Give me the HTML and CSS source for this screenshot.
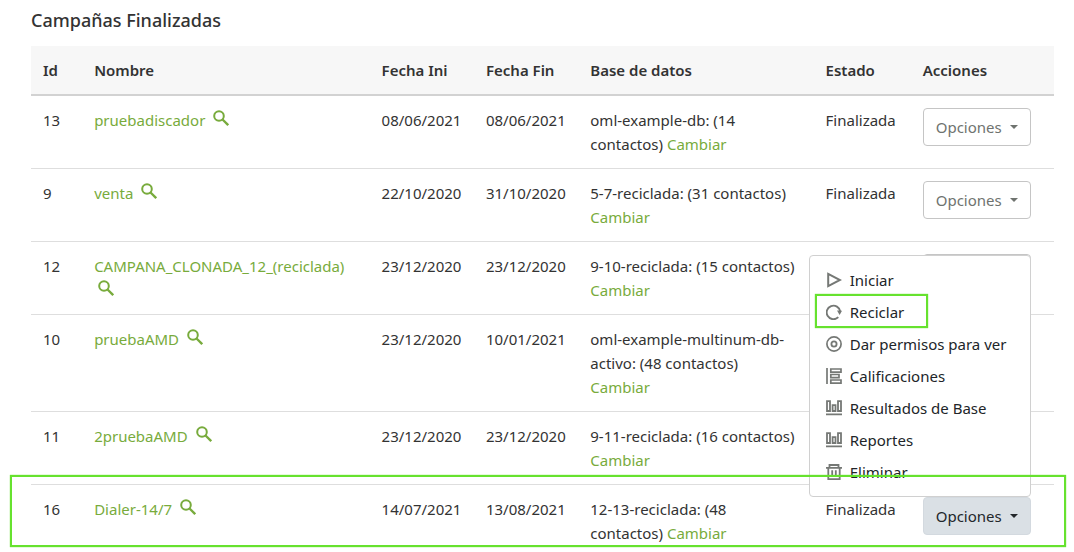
FILE: index.html
```
<!DOCTYPE html>
<html lang="es">
<head>
    <meta charset="UTF-8">
    <meta name="viewport" content="width=device-width, initial-scale=1.0">
    <title>Campañas Finalizadas</title>
    <link rel="stylesheet" href="styles.css">
</head>
<body>
    <!-- icon definitions -->
    <svg class="sprite" aria-hidden="true">
        <symbol id="search" viewBox="0 0 16 16">
            <circle cx="6" cy="6" r="4.8" fill="none" stroke="currentColor" stroke-width="2"/>
            <path d="M9.3 9.3L15.2 15.2" fill="none" stroke="currentColor" stroke-width="2.3"/>
        </symbol>
        <symbol id="play" viewBox="0 0 16 16">
            <path d="M2.2 1.8V14.2L14 8Z" fill="none" stroke="currentColor" stroke-width="2"/>
        </symbol>
        <symbol id="recycle" viewBox="0 0 16 16">
            <path d="M12.3 13.2A6.8 6.8 0 1 1 14.2 7.5" fill="none" stroke="currentColor" stroke-width="1.9"/>
            <path d="M11 6.5L16 6.7L13.6 11Z" fill="currentColor"/>
        </symbol>
        <symbol id="view" viewBox="0 0 16 16">
            <circle cx="8" cy="8" r="7.1" fill="none" stroke="currentColor" stroke-width="1.7"/>
            <circle cx="8" cy="8" r="2.6" fill="none" stroke="currentColor" stroke-width="1.8"/>
        </symbol>
        <symbol id="list" viewBox="0 0 16 16">
            <path d="M1 0V16M4.8 1H15V4.2H4.8ZM4.8 6.5H13V9.6H4.8ZM4.8 12H15V15.1H4.8Z" fill="none" stroke="currentColor" stroke-width="1.7"/>
        </symbol>
        <symbol id="chart" viewBox="0 0 16 16">
            <path d="M1 1.2H4V11H1ZM6.6 5.2H9.5V11H6.6ZM12 1.2H15V11H12ZM0 14.4H16" fill="none" stroke="currentColor" stroke-width="1.8"/>
        </symbol>
        <symbol id="trash" viewBox="0 0 16 16">
            <path d="M0 3.8H16M3.5 3.5V1H12.5V3.5M2.3 4V15.1H13.7V4M6.2 6.3V12.6M9.8 6.3V12.6" fill="none" stroke="currentColor" stroke-width="1.8"/>
        </symbol>
    </svg>

    <div class="content">
        <h2>Campañas Finalizadas</h2>

        <table class="campaigns">
            <colgroup>
                <col class="col-id">
                <col class="col-name">
                <col class="col-date">
                <col class="col-date">
                <col class="col-base">
                <col class="col-status">
                <col class="col-actions">
            </colgroup>
            <thead>
                <tr>
                    <th>Id</th>
                    <th>Nombre</th>
                    <th>Fecha Ini</th>
                    <th>Fecha Fin</th>
                    <th>Base de datos</th>
                    <th>Estado</th>
                    <th>Acciones</th>
                </tr>
            </thead>
            <tbody>
                <tr>
                    <td>13</td>
                    <td><a href="#">pruebadiscador</a> <a href="#" aria-label="Ver detalle"><svg class="search"><use href="#search"/></svg></a></td>
                    <td>08/06/2021</td>
                    <td>08/06/2021</td>
                    <td class="base">oml-example-db: (14 contactos) <a href="#">Cambiar</a></td>
                    <td>Finalizada</td>
                    <td><button class="btn">Opciones</button></td>
                </tr>
                <tr>
                    <td>9</td>
                    <td><a href="#">venta</a> <a href="#" aria-label="Ver detalle"><svg class="search"><use href="#search"/></svg></a></td>
                    <td>22/10/2020</td>
                    <td>31/10/2020</td>
                    <td class="base">5-7-reciclada: (31 contactos) <a href="#">Cambiar</a></td>
                    <td>Finalizada</td>
                    <td><button class="btn">Opciones</button></td>
                </tr>
                <tr>
                    <td>12</td>
                    <td><a href="#">CAMPANA_CLONADA_12_(reciclada)</a> <a href="#" aria-label="Ver detalle"><svg class="search"><use href="#search"/></svg></a></td>
                    <td>23/12/2020</td>
                    <td>23/12/2020</td>
                    <td class="base">9-10-reciclada: (15 contactos) <a href="#">Cambiar</a></td>
                    <td></td>
                    <td><button class="btn" aria-label="Opciones"></button></td>
                </tr>
                <tr>
                    <td>10</td>
                    <td><a href="#">pruebaAMD</a> <a href="#" aria-label="Ver detalle"><svg class="search"><use href="#search"/></svg></a></td>
                    <td>23/12/2020</td>
                    <td>10/01/2021</td>
                    <td class="base">oml-example-multinum-db-activo: (48 contactos) <a href="#">Cambiar</a></td>
                    <td></td>
                    <td><button class="btn" aria-label="Opciones"></button></td>
                </tr>
                <tr>
                    <td>11</td>
                    <td><a href="#">2pruebaAMD</a> <a href="#" aria-label="Ver detalle"><svg class="search"><use href="#search"/></svg></a></td>
                    <td>23/12/2020</td>
                    <td>23/12/2020</td>
                    <td class="base">9-11-reciclada: (16 contactos) <a href="#">Cambiar</a></td>
                    <td></td>
                    <td><button class="btn" aria-label="Opciones"></button></td>
                </tr>
                <tr class="marked-row">
                    <td>16</td>
                    <td><a href="#">Dialer-14/7</a> <a href="#" aria-label="Ver detalle"><svg class="search"><use href="#search"/></svg></a></td>
                    <td>14/07/2021</td>
                    <td>13/08/2021</td>
                    <td class="base">12-13-reciclada: (48 contactos) <a href="#">Cambiar</a></td>
                    <td>Finalizada</td>
                    <td>
                        <div class="dropup">
                            <button class="btn active" aria-expanded="true">Opciones</button>
                            <div class="menu">
                                <a href="#"><svg><use href="#play"/></svg>Iniciar</a>
                                <a href="#" class="marked-item"><svg><use href="#recycle"/></svg>Reciclar</a>
                                <a href="#"><svg><use href="#view"/></svg>Dar permisos para ver</a>
                                <a href="#"><svg><use href="#list"/></svg>Calificaciones</a>
                                <a href="#"><svg><use href="#chart"/></svg>Resultados de Base</a>
                                <a href="#"><svg><use href="#chart"/></svg>Reportes</a>
                                <a href="#"><svg><use href="#trash"/></svg>Eliminar</a>
                            </div>
                        </div>
                    </td>
                </tr>
            </tbody>
        </table>
    </div>
</body>
</html>
```

FILE: styles.css
```
* {
    box-sizing: border-box;
}
body {
    margin: 0;
    font-family: "Noto Sans", sans-serif;
    font-size: 15px;
    line-height: 24px;
    color: #333;
    background-color: #fff;
}
.sprite {
    display: none;
}
.content {
    padding: 8px 20px 0 31px;
}
h2 {
    margin: 0 0 14px;
    font-size: 18px;
    font-weight: 500;
    line-height: 24px;
}
a {
    color: #78ab3c;
    text-decoration: none;
}
.campaigns {
    width: 100%;
    table-layout: fixed;
    border-collapse: separate;
    border-spacing: 0;
}
.col-id { width: 5%; }
.col-name { width: 28.1%; }
.col-date { width: 10.2%; }
.col-base { width: 23%; }
.col-status { width: 9.5%; }
.col-actions { width: 14%; }
th {
    padding: 12px;
    background-color: #f7f7f7;
    border-bottom: 2px solid #d2d2d2;
    font-weight: 600;
    text-align: left;
}
td {
    padding: 12px;
    border-bottom: 1px solid #dedede;
    vertical-align: top;
}
.base {
    padding-right: 16px;
}
.search {
    width: 16px;
    height: 16px;
    margin-left: 4px;
}
.btn {
    display: flex;
    align-items: center;
    gap: 8px;
    min-width: 108px;
    height: 38px;
    padding: 0 12px;
    font: inherit;
    color: #6f736f;
    background-color: #fff;
    border: 1px solid #c5c5c5;
    border-radius: 4px;
    cursor: pointer;
}
.btn::after {
    content: "";
    border: 4px solid transparent;
    border-top-color: currentColor;
    border-bottom: 0;
}
.btn.active {
    color: #23272b;
    background-color: #dae0e5;
    border-color: #d3d9df;
}

/* options menu, opens above its button */
.dropup {
    position: relative;
    width: fit-content;
}
.menu {
    position: absolute;
    right: 0;
    bottom: 100%;
    z-index: 10;
    width: 222px;
    padding: 8px 0;
    background-color: #fff;
    border: 1px solid #d0d0d0;
    border-radius: 4px;
}
.menu a {
    display: flex;
    align-items: center;
    gap: 8px;
    padding: 4px 16px;
    color: #212529;
    white-space: nowrap;
}
.menu svg {
    width: 16px;
    height: 16px;
    color: #757875;
}

/* green marks */
.marked-row,
.marked-item {
    position: relative;
}
.marked-row td {
    padding-bottom: 4px;
    border-bottom: 0;
}
.marked-row::after,
.marked-item::after {
    content: "";
    position: absolute;
    border: 2px solid #66e22e;
    box-shadow: 0 0 1px #66e22e;
    pointer-events: none;
}
.marked-row::after {
    inset: -10px -12px 2px -21px;
    z-index: 20;
}
.marked-item::after {
    inset: -2px 102px 0 5px;
}
```
